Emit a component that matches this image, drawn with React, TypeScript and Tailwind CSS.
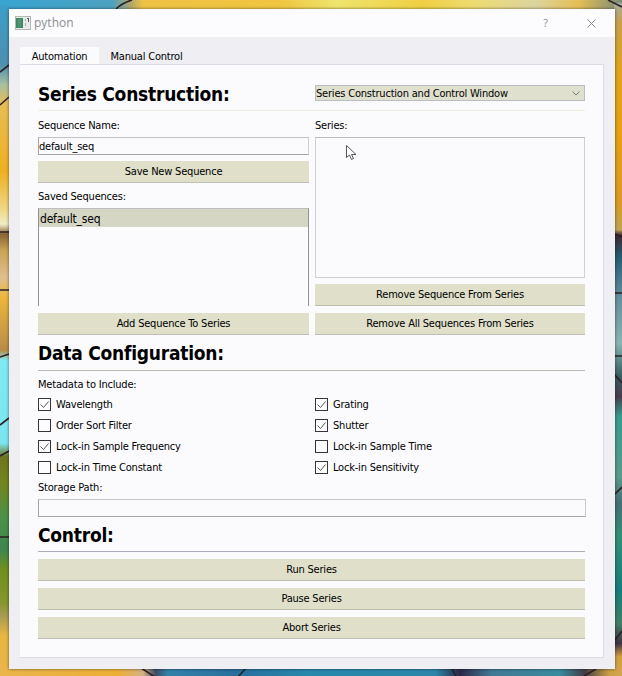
import React from "react";

const ui = "font-['DejaVu_Sans_Condensed','DejaVu_Sans',sans-serif] [font-stretch:condensed] tracking-[-0.2px]";

function Wallpaper() {
  return (
    <svg className="absolute inset-0" width="622" height="676" viewBox="0 0 622 676" aria-hidden="true">
      <defs>
        <linearGradient id="left" x1="0" y1="0" x2="0" y2="1">
          <stop offset="0" stopColor="#3b9fc8" />
          <stop offset=".09" stopColor="#4f8fb0" />
          <stop offset=".12" stopColor="#a8c0a0" />
          <stop offset=".15" stopColor="#e8bd55" />
          <stop offset=".25" stopColor="#eeb020" />
          <stop offset=".31" stopColor="#efd98a" />
          <stop offset=".33" stopColor="#f3ecc8" />
          <stop offset=".345" stopColor="#8a6434" />
          <stop offset=".37" stopColor="#c9a457" />
          <stop offset=".41" stopColor="#e0bf90" />
          <stop offset=".44" stopColor="#edb83c" />
          <stop offset=".52" stopColor="#b98b48" />
          <stop offset=".535" stopColor="#80eaf4" />
          <stop offset=".66" stopColor="#7be6f0" />
          <stop offset=".68" stopColor="#6d7420" />
          <stop offset=".72" stopColor="#74851f" />
          <stop offset=".77" stopColor="#4c9148" />
          <stop offset=".82" stopColor="#3f8550" />
          <stop offset=".85" stopColor="#718f1e" />
          <stop offset=".9" stopColor="#85962e" />
          <stop offset=".92" stopColor="#a89b54" />
          <stop offset=".95" stopColor="#e8b640" />
          <stop offset="1" stopColor="#eab54b" />
        </linearGradient>
        <linearGradient id="right" x1="0" y1="0" x2="0" y2="1">
          <stop offset="0" stopColor="#a6afa0" />
          <stop offset=".03" stopColor="#c9a04c" />
          <stop offset=".1" stopColor="#dfa51b" />
          <stop offset=".2" stopColor="#e6a213" />
          <stop offset=".3" stopColor="#d89b25" />
          <stop offset=".34" stopColor="#bda653" />
          <stop offset=".348" stopColor="#3e2634" />
          <stop offset=".38" stopColor="#275d6d" />
          <stop offset=".44" stopColor="#658d9d" />
          <stop offset=".51" stopColor="#8bb4b3" />
          <stop offset=".56" stopColor="#375d60" />
          <stop offset=".59" stopColor="#493d4e" />
          <stop offset=".62" stopColor="#379d8e" />
          <stop offset=".71" stopColor="#5b9a8d" />
          <stop offset=".75" stopColor="#466e75" />
          <stop offset=".8" stopColor="#349079" />
          <stop offset=".88" stopColor="#167d7b" />
          <stop offset=".93" stopColor="#427f68" />
          <stop offset=".96" stopColor="#3f3142" />
          <stop offset=".98" stopColor="#d1a13f" />
          <stop offset="1" stopColor="#d5a34a" />
        </linearGradient>
        <linearGradient id="top">
          <stop offset="0" stopColor="#38a4d1" />
          <stop offset=".18" stopColor="#4ca1c0" />
          <stop offset=".21" stopColor="#b2a66d" />
          <stop offset=".23" stopColor="#eec345" />
          <stop offset=".45" stopColor="#f0c540" />
          <stop offset=".54" stopColor="#efe46d" />
          <stop offset=".68" stopColor="#f0cf43" />
          <stop offset=".76" stopColor="#eedb70" />
          <stop offset=".86" stopColor="#dcd4a0" />
          <stop offset=".93" stopColor="#e5bf54" />
          <stop offset="1" stopColor="#7b8a78" />
        </linearGradient>
        <linearGradient id="bottom">
          <stop offset="0" stopColor="#eab54b" />
          <stop offset=".19" stopColor="#ecae35" />
          <stop offset=".23" stopColor="#d3b184" />
          <stop offset=".25" stopColor="#3c4c62" />
          <stop offset=".27" stopColor="#3282aa" />
          <stop offset=".38" stopColor="#286f9d" />
          <stop offset=".5" stopColor="#2889ac" />
          <stop offset=".7" stopColor="#2b86a8" />
          <stop offset=".74" stopColor="#2c2848" />
          <stop offset=".79" stopColor="#427995" />
          <stop offset=".9" stopColor="#388b9d" />
          <stop offset=".94" stopColor="#443c46" />
          <stop offset=".98" stopColor="#caa046" />
          <stop offset="1" stopColor="#d2a54d" />
        </linearGradient>
      </defs>
      <rect width="622" height="10" fill="url(#top)" />
      <rect y="668" width="622" height="8" fill="url(#bottom)" />
      <rect y="5" width="10" height="664" fill="url(#left)" />
      <rect x="614" y="3" width="8" height="667" fill="url(#right)" />
      <g stroke="#2d2027" strokeWidth="1.6" fill="none">
        <path d="M116 9Q122 3 132 0M0 105l9-8M0 72l9-7M0 232h9M0 290h9M0 357l9-3M0 425l9-7M0 456l9-5M0 537h9M608 0l14 7M615 234l7 3M615 293h7M615 356h7M615 375l7 8M615 494l7-7M615 640l7-9M141 668l14 9M238 677l8-9M452 669l4 7M584 676l12-7" />
      </g>
    </svg>
  );
}

function Button({ children }: { children: string }) {
  return (
    <button className="block h-[22px] w-full border-b border-[#bdbdb0] bg-[#dfdfca] text-center leading-[22px] tracking-[-0.2px]">
      {children}
    </button>
  );
}

function Check({ label, on }: { label: string; on?: boolean }) {
  return (
    <label className="flex h-[21px] items-center gap-[5px]">
      <svg width="13" height="13" viewBox="0 0 13 13" fill="none">
        <rect x=".5" y=".5" width="12" height="12" fill="#fdfdfe" stroke="#34343a" />
        {on && <path d="M2.5 6.5l3 3 5-6" stroke="#55555b" />}
      </svg>
      <span>{label}</span>
    </label>
  );
}

function Section({ children }: { children: string }) {
  return <h2 className="text-[19px] font-bold leading-6 tracking-[-0.23px]">{children}</h2>;
}

export default function App() {
  return (
    <main className={`relative h-[676px] w-[622px] overflow-hidden p-[9px] text-[11px] leading-[14px] text-black ${ui}`}>
      <Wallpaper />
      <div className="relative flex h-[660px] w-[606px] flex-col bg-[#eeeef3] shadow-[0_0_3px_#0008]">
        <header className="flex h-7 shrink-0 items-center bg-[#fcfcfe] tracking-normal text-[#8d8d91] [font-stretch:normal]">
          <svg className="ml-1.5" width="16" height="14" viewBox="0 0 16 14">
            <rect x=".5" y=".5" width="15" height="13" fill="#e8ece8" stroke="#b4b8b4" />
            <path d="M1 2h7v10H1z" fill="#3e8864" />
            <path d="M3 3h3v8H3z" fill="#529476" />
            <path d="M10 3h1v2h-1zm0 4h1v3h-1z" fill="#a9a9bc" />
            <path d="M12 2h2v4h-1V3h-1z" fill="#555b65" />
          </svg>
          <span className="ml-[3px] font-['Open_Sans',sans-serif] text-xs leading-4">python</span>
          <span className="ml-auto mr-[39px] font-['Open_Sans',sans-serif] text-[11px]">?</span>
          <svg className="mr-[19px]" width="9" height="9" viewBox="0 0 9 9" stroke="#8b8b8f" fill="none">
            <path d="M.5.5l8 8m0-8l-8 8" />
          </svg>
        </header>

        <nav className="ml-[11px] flex h-[27px] shrink-0 items-end">
          <div className="h-[17px] w-[79px] bg-[#fbfbfe] pt-[3px] text-center leading-[13px]">Automation</div>
          <div className="h-[14px] w-[95px] text-center">Manual Control</div>
        </nav>

        <section className="ml-[11px] h-[594px] w-[584px] border-b border-r border-t border-[#dcdce6] bg-[#fbfbfe] pl-[18px] pr-[18px]">
          <div className="mt-[17px] flex h-[29px] justify-between border-b border-[#eeeedc]">
            <Section>Series Construction:</Section>
            <div className="mt-[3px] flex h-4 w-[270px] items-center justify-between border border-[#b9bdc4] bg-[#e0e0cf] pr-1">
              <span className="mt-0.5 whitespace-nowrap">Series Construction and Control Window</span>
              <svg width="8" height="5" viewBox="0 0 8 5" fill="none" stroke="#77777a">
                <path d="M.5.5L4 4 7.5.5" />
              </svg>
            </div>
          </div>

          <div className="grid h-[225px] grid-cols-[271px_270px] gap-x-1.5 pt-[7px]">
            <div>
              <div className="h-[19px] pt-px">Sequence Name:</div>
              <div className="h-[18px] border border-[#a5a5a8] border-r-[#d1d1cc] border-t-[#c1c1c9] leading-[17px]">default_seq</div>
              <div className="mt-1.5"><Button>Save New Sequence</Button></div>
              <div className="mt-1.5 h-[19px] pt-px">Saved Sequences:</div>
              <div className="h-[98px] border-x border-t border-[#929296] border-t-[#bebec0]">
                <div className="h-[18px] bg-[#d6d6c5] pl-px text-xs leading-[20px]">default_seq</div>
              </div>
              <div className="mt-[7px]"><Button>Add Sequence To Series</Button></div>
            </div>
            <div>
              <div className="h-[19px] pt-px">Series:</div>
              <div className="h-[141px] border border-[#cfcfd4] border-t-[#bbbbc1]" />
              <div className="mt-1.5"><Button>Remove Sequence From Series</Button></div>
              <div className="mt-[7px]"><Button>Remove All Sequences From Series</Button></div>
            </div>
          </div>

          <div className="mt-[5px] h-[30px] border-b border-[#b9b9b0]"><Section>Data Configuration:</Section></div>
          <div className="mt-[7px] h-[16px]">Metadata to Include:</div>
          <div className="grid grid-cols-[271px_270px] gap-x-1.5">
            <Check label="Wavelength" on />
            <Check label="Grating" on />
            <Check label="Order Sort Filter" />
            <Check label="Shutter" on />
            <Check label="Lock-in Sample Frequency" on />
            <Check label="Lock-in Sample Time" />
            <Check label="Lock-in Time Constant" />
            <Check label="Lock-in Sensitivity" on />
          </div>
          <div className="mt-[3px] h-[18px]">Storage Path:</div>
          <div className="h-[18px] w-[548px] border border-[#a5a5aa] border-r-[#cacad2] border-t-[#c5c5ce]" />
          <div className="mt-[6px] h-[29px] border-b border-[#aeaebb]"><Section>Control:</Section></div>
          <div className="mt-[7px] flex flex-col gap-[7px]">
            <Button>Run Series</Button>
            <Button>Pause Series</Button>
            <Button>Abort Series</Button>
          </div>
        </section>
      </div>
      <svg className="absolute left-[346px] top-[145px]" width="11" height="16" viewBox="0 0 11 16">
        <path d="M.5.5v12l3-2.5 2 4.5 2-1-2-4h4.5z" fill="white" stroke="#55555a" />
      </svg>
    </main>
  );
}
